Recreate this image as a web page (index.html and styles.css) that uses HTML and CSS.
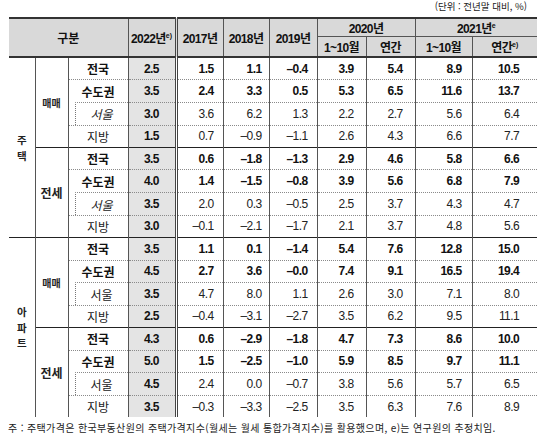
FILE: index.html
```html
<!DOCTYPE html>
<html lang="ko">
<head>
<meta charset="utf-8">
<title>주택가격 전망</title>
<link rel="stylesheet" href="styles.css">
</head>
<body>
<div class="unit">(단위 : 전년말 대비, %)</div>
<table class="tbl">
  <colgroup>
    <col class="c-grp"><col class="c-kind"><col class="c-rg"><col class="c-y22">
    <col class="c-17"><col class="c-18"><col class="c-19">
    <col class="c-20a"><col class="c-20b"><col class="c-21a"><col class="c-21b">
  </colgroup>
  <thead>
    <tr class="h1">
      <th colspan="3" rowspan="2" class="gubun">구분</th>
      <th rowspan="2" class="y22h">2022년<sup>e)</sup></th>
      <th rowspan="2" class="dbl">2017년</th>
      <th rowspan="2">2018년</th>
      <th rowspan="2">2019년</th>
      <th colspan="2">2020년</th>
      <th colspan="2">2021년<sup>e</sup></th>
    </tr>
    <tr class="h2">
      <th>1~10월</th><th>연간</th><th>1~10월</th><th>연간<sup>e)</sup></th>
    </tr>
  </thead>
  <tbody>
    <!-- 주택 매매 -->
    <tr class="b first">
      <td rowspan="8" class="grp"><span class="vt">주</span><span class="vt">택</span></td>
      <td rowspan="4" class="kind small">매매</td>
      <td class="rg">전국</td><td class="y22">2.5</td>
      <td class="n17 dbl">1.5</td><td class="n18">1.1</td><td class="n19">–0.4</td>
      <td class="n20a">3.9</td><td class="n20b">5.4</td><td class="n21a">8.9</td><td class="n21b">10.5</td>
    </tr>
    <tr class="b">
      <td class="rg">수도권</td><td class="y22">3.5</td>
      <td class="n17 dbl">2.4</td><td class="n18">3.3</td><td class="n19">0.5</td>
      <td class="n20a">5.3</td><td class="n20b">6.5</td><td class="n21a">11.6</td><td class="n21b">13.7</td>
    </tr>
    <tr class="seoul">
      <td class="rg sb"><div class="sbox it">서울</div></td><td class="y22">3.0</td>
      <td class="n17 dbl">3.6</td><td class="n18">6.2</td><td class="n19">1.3</td>
      <td class="n20a">2.2</td><td class="n20b">2.7</td><td class="n21a">5.6</td><td class="n21b">6.4</td>
    </tr>
    <tr>
      <td class="rg">지방</td><td class="y22">1.5</td>
      <td class="n17 dbl">0.7</td><td class="n18">–0.9</td><td class="n19">–1.1</td>
      <td class="n20a">2.6</td><td class="n20b">4.3</td><td class="n21a">6.6</td><td class="n21b">7.7</td>
    </tr>
    <!-- 주택 전세 -->
    <tr class="b sec">
      <td rowspan="4" class="kind">전세</td>
      <td class="rg">전국</td><td class="y22">3.5</td>
      <td class="n17 dbl">0.6</td><td class="n18">–1.8</td><td class="n19">–1.3</td>
      <td class="n20a">2.9</td><td class="n20b">4.6</td><td class="n21a">5.8</td><td class="n21b">6.6</td>
    </tr>
    <tr class="b">
      <td class="rg">수도권</td><td class="y22">4.0</td>
      <td class="n17 dbl">1.4</td><td class="n18">–1.5</td><td class="n19">–0.8</td>
      <td class="n20a">3.9</td><td class="n20b">5.6</td><td class="n21a">6.8</td><td class="n21b">7.9</td>
    </tr>
    <tr class="seoul">
      <td class="rg sb"><div class="sbox it">서울</div></td><td class="y22">3.5</td>
      <td class="n17 dbl">2.0</td><td class="n18">0.3</td><td class="n19">–0.5</td>
      <td class="n20a">2.5</td><td class="n20b">3.7</td><td class="n21a">4.3</td><td class="n21b">4.7</td>
    </tr>
    <tr>
      <td class="rg">지방</td><td class="y22">3.0</td>
      <td class="n17 dbl">–0.1</td><td class="n18">–2.1</td><td class="n19">–1.7</td>
      <td class="n20a">2.1</td><td class="n20b">3.7</td><td class="n21a">4.8</td><td class="n21b">5.6</td>
    </tr>
    <!-- 아파트 매매 -->
    <tr class="b sec top">
      <td rowspan="8" class="grp"><span class="vt">아</span><span class="vt">파</span><span class="vt">트</span></td>
      <td rowspan="4" class="kind small">매매</td>
      <td class="rg">전국</td><td class="y22">3.5</td>
      <td class="n17 dbl">1.1</td><td class="n18">0.1</td><td class="n19">–1.4</td>
      <td class="n20a">5.4</td><td class="n20b">7.6</td><td class="n21a">12.8</td><td class="n21b">15.0</td>
    </tr>
    <tr class="b">
      <td class="rg">수도권</td><td class="y22">4.5</td>
      <td class="n17 dbl">2.7</td><td class="n18">3.6</td><td class="n19">–0.0</td>
      <td class="n20a">7.4</td><td class="n20b">9.1</td><td class="n21a">16.5</td><td class="n21b">19.4</td>
    </tr>
    <tr class="seoul">
      <td class="rg sb"><div class="sbox">서울</div></td><td class="y22">3.5</td>
      <td class="n17 dbl">4.7</td><td class="n18">8.0</td><td class="n19">1.1</td>
      <td class="n20a">2.6</td><td class="n20b">3.0</td><td class="n21a">7.1</td><td class="n21b">8.0</td>
    </tr>
    <tr>
      <td class="rg">지방</td><td class="y22">2.5</td>
      <td class="n17 dbl">–0.4</td><td class="n18">–3.1</td><td class="n19">–2.7</td>
      <td class="n20a">3.5</td><td class="n20b">6.2</td><td class="n21a">9.5</td><td class="n21b">11.1</td>
    </tr>
    <!-- 아파트 전세 -->
    <tr class="b sec">
      <td rowspan="4" class="kind">전세</td>
      <td class="rg">전국</td><td class="y22">4.3</td>
      <td class="n17 dbl">0.6</td><td class="n18">–2.9</td><td class="n19">–1.8</td>
      <td class="n20a">4.7</td><td class="n20b">7.3</td><td class="n21a">8.6</td><td class="n21b">10.0</td>
    </tr>
    <tr class="b">
      <td class="rg">수도권</td><td class="y22">5.0</td>
      <td class="n17 dbl">1.5</td><td class="n18">–2.5</td><td class="n19">–1.0</td>
      <td class="n20a">5.9</td><td class="n20b">8.5</td><td class="n21a">9.7</td><td class="n21b">11.1</td>
    </tr>
    <tr class="seoul">
      <td class="rg sb"><div class="sbox">서울</div></td><td class="y22">4.5</td>
      <td class="n17 dbl">2.4</td><td class="n18">0.0</td><td class="n19">–0.7</td>
      <td class="n20a">3.8</td><td class="n20b">5.6</td><td class="n21a">5.7</td><td class="n21b">6.5</td>
    </tr>
    <tr>
      <td class="rg">지방</td><td class="y22">3.5</td>
      <td class="n17 dbl">–0.3</td><td class="n18">–3.3</td><td class="n19">–2.5</td>
      <td class="n20a">3.5</td><td class="n20b">6.3</td><td class="n21a">7.6</td><td class="n21b">8.9</td>
    </tr>
  </tbody>
</table>
<p class="note">주 : 주택가격은 한국부동산원의 주택가격지수(월세는 월세 통합가격지수)를 활용했으며, e)는 연구원의 추정치임.</p>
</body>
</html>
```
FILE: styles.css
```css
html, body {
  margin: 0;
  padding: 0;
  background: #ffffff;
}
body {
  width: 540px;
  height: 437px;
  overflow: hidden;
  color: #111111;
  font-family: "Liberation Sans", "Noto Sans CJK KR", sans-serif;
}
.unit {
  height: 17px;
  box-sizing: border-box;
  padding-right: 13px;
  text-align: right;
  font-family: "Noto Sans CJK KR", sans-serif;
  font-size: 9.5px;
  line-height: 12px;
  color: #222;
}
.tbl {
  margin-left: 9px;
  width: 528px;
  table-layout: fixed;
  border-collapse: collapse;
  font-size: 12px;
  letter-spacing: -0.6px;
}
.c-grp { width: 26px; }
.c-kind { width: 33px; }
.c-rg { width: 60px; }
.c-y22 { width: 48px; }
.c-17 { width: 47px; }
.c-18 { width: 46px; }
.c-19 { width: 48px; }
.c-20a { width: 49px; }
.c-20b { width: 49px; }
.c-21a { width: 57px; }
.c-21b { width: 65px; }

.tbl th {
  background: #d9d9d9;
  font-weight: bold;
  padding: 0;
  border-left: 1px solid #555;
  border-top: 1px solid #555;
  text-align: center;
  white-space: nowrap;
  font-size: 12px;
}
.tbl tr.h1 th { border-top: 2px solid #333; height: 17px; }
.tbl tr.h2 th { height: 19px; }
.tbl thead tr.h2 th { border-bottom: 2px solid #333; }
.tbl th.gubun { border-left: none; border-bottom: 2px solid #333; font-family: "Noto Sans CJK KR", sans-serif; letter-spacing: 0; }
.tbl th.y22h, .tbl th.dbl, .tbl tr.h1 th { border-bottom: 2px solid #333; }
.tbl tr.h1 th[colspan] { border-bottom: 1px solid #555; }
.tbl th.dbl, .tbl td.dbl { border-left: 3px double #444; }
.tbl sup {
  font-size: 7px;
  line-height: 0;
  vertical-align: 5px;
  letter-spacing: 0;
}

.tbl td {
  height: 21.4px;
  padding: 0;
  border-left: 1px solid #555;
  border-top: 1px dotted #8a8a8a;
  text-align: right;
  white-space: nowrap;
  font-size: 12px;
}
.tbl tr.first td { border-top: 2px solid #333; }
.tbl tr.sec td { border-top: 1.5px solid #222; }
.tbl td.grp {
  border-left: none;
  text-align: center;
  font-family: "Noto Sans CJK KR", sans-serif;
  font-size: 10.5px;
  letter-spacing: 0;
  color: #222;
}
.vt {
  display: block;
  height: 15.5px;
  line-height: 15.5px;
}
.tbl td.kind {
  text-align: center;
  font-family: "Noto Sans CJK KR", sans-serif;
  font-size: 12px;
  letter-spacing: 0;
  color: #222;
  font-weight: normal;
}
.tbl td.kind.small { font-size: 10px; }
.tbl td.rg {
  text-align: center;
  font-family: "Noto Sans CJK KR", sans-serif;
  letter-spacing: 0;
  color: #222;
}
.tbl tr.b td.rg { font-weight: bold; color: #111; }
.tbl tr.seoul td.rg { border-top: none; padding: 0; }
.sbox {
  margin-left: 6px;
  height: 22.4px;
  box-sizing: border-box;
  border-left: 1px dotted #777;
  border-top: 1px dotted #8a8a8a;
  display: flex;
  align-items: center;
  justify-content: center;
}
.sbox.it { font-style: italic; }

.tbl td.y22 {
  background: #e4e4e4;
  text-align: center;
  font-weight: bold;
}
.tbl tr.b td { font-weight: bold; }
.tbl tr:not(.b) td:not(.y22) { color: #222; }

.n17 { padding-right: 9px !important; }
.n18 { padding-right: 7px !important; }
.n19 { padding-right: 9px !important; }
.n20a { padding-right: 12px !important; }
.n20b { padding-right: 12px !important; }
.n21a { padding-right: 10px !important; }
.n21b { padding-right: 18px !important; }

.note {
  margin: 4px 0 0 8px;
  font-family: "Noto Sans CJK KR", sans-serif;
  font-size: 10px;
  line-height: 14px;
  letter-spacing: 0.35px;
  color: #222;
  white-space: nowrap;
}
```
